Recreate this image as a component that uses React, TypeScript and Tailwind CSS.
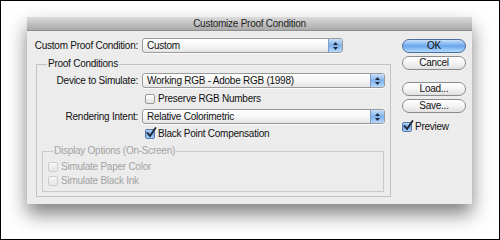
import React from 'react';

const FONT = { fontFamily: '"Liberation Sans", Arial, sans-serif' };

function SelectBox({ value, width }: { value: string; width: string }) {
  return (
    <div
      className={`${width} h-[15px] flex items-stretch rounded-[3px] border border-[#9a9a9a] bg-gradient-to-b from-white via-[#f7f7f7] to-[#e4e4e4] shadow-[0_1px_0_rgba(255,255,255,0.8)] overflow-hidden`}
    >
      <div className="flex-1 flex items-center pl-[4px] text-[10px] leading-none text-[#111] whitespace-nowrap">{value}</div>
      <div className="w-[14px] flex flex-col items-center justify-center gap-[2px] border-l border-[#7d9ccc] bg-gradient-to-b from-[#c9e0f8] via-[#7fb2ec] to-[#b7d8fb]">
        <svg width="5" height="3" viewBox="0 0 5 3">
          <path d="M2.5 0 L5 3 L0 3 Z" fill="#1f2a3a" />
        </svg>
        <svg width="5" height="3" viewBox="0 0 5 3">
          <path d="M0 0 L5 0 L2.5 3 Z" fill="#1f2a3a" />
        </svg>
      </div>
    </div>
  );
}

function CheckBox({ checked, disabled }: { checked?: boolean; disabled?: boolean }) {
  if (checked) {
    return (
      <div className="relative w-[10px] h-[10px] rounded-[2px] border border-[#5677a8] bg-gradient-to-b from-[#b5d4f6] via-[#6fa6e6] to-[#a9d0fa]">
        <svg className="absolute left-[0px] top-[-3px]" width="11" height="11" viewBox="0 0 11 11">
          <path d="M1.5 6 L4 9 L9.5 1" stroke="#1c2430" strokeWidth="1.8" fill="none" strokeLinecap="round" />
        </svg>
      </div>
    );
  }
  return (
    <div
      className={
        disabled
          ? 'w-[10px] h-[10px] rounded-[2px] border border-[#cdcdcd] bg-gradient-to-b from-[#f6f6f6] to-[#e6e6e6]'
          : 'w-[10px] h-[10px] rounded-[2px] border border-[#9a9a9a] bg-gradient-to-b from-white to-[#e2e2e2]'
      }
    />
  );
}

function PillButton({ label, primary }: { label: string; primary?: boolean }) {
  return (
    <div
      className={
        primary
          ? 'w-[64px] h-[14px] rounded-full border border-[#4d6e9c] bg-gradient-to-b from-[#c6e0fa] via-[#6aa6ea] to-[#b4dbff] flex items-center justify-center text-[10px] leading-none text-[#111]'
          : 'w-[64px] h-[14px] rounded-full border border-[#8c8c8c] bg-gradient-to-b from-white via-[#f4f4f4] to-[#e0e0e0] flex items-center justify-center text-[10px] leading-none text-[#111]'
      }
    >
      {label}
    </div>
  );
}

export default function App() {
  return (
    <div className="w-[500px] h-[240px] bg-white border border-black overflow-hidden tracking-[-0.25px]" style={FONT}>
      <div className="ml-[26px] mt-[16px] w-[445px] h-[187px] bg-[#ececec] flex flex-col shadow-[0_10px_18px_rgba(0,0,0,0.5)]">
        {/* Title bar */}
        <div className="h-[14px] flex items-center justify-center bg-gradient-to-b from-[#dcdcdc] to-[#a9a9a9] border-b border-[#8e8e8e] text-[10px] leading-none text-[#1e1e1e]">
          Customize Proof Condition
        </div>

        <div className="flex pl-[7px] pt-[7px]">
          {/* Left column */}
          <div className="w-[356px] flex flex-col">
            <div className="flex items-center">
              <div className="w-[104px] text-right text-[10px] leading-none text-[#111] whitespace-nowrap">Custom Proof Condition:</div>
              <div className="ml-[4px]">
                <SelectBox value="Custom" width="w-[201px]" />
              </div>
            </div>

            <fieldset className="ml-[2px] mt-[4px] w-[355px] border border-[#c2c2c2] pb-[4px]">
              <legend className="ml-[10px] px-[1px] text-[10px] leading-[14px] text-[#111]">Proof Conditions</legend>

              <div className="mt-[2px] flex items-center">
                <div className="w-[101px] text-right text-[10px] leading-none text-[#111] whitespace-nowrap">Device to Simulate:</div>
                <div className="ml-[4px]">
                  <SelectBox value="Working RGB - Adobe RGB (1998)" width="w-[243px]" />
                </div>
              </div>

              <div className="mt-[4px] h-[14px] pl-[108px] flex items-center gap-[3px]">
                <CheckBox />
                <span className="text-[10px] leading-none text-[#111]">Preserve RGB Numbers</span>
              </div>

              <div className="mt-[3px] flex items-center">
                <div className="w-[101px] text-right text-[10px] leading-none text-[#111] whitespace-nowrap">Rendering Intent:</div>
                <div className="ml-[4px]">
                  <SelectBox value="Relative Colorimetric" width="w-[243px]" />
                </div>
              </div>

              <div className="mt-[3px] h-[14px] pl-[108px] flex items-center gap-[3px]">
                <CheckBox checked />
                <span className="text-[10px] leading-none text-[#111]">Black Point Compensation</span>
              </div>

              <fieldset className="ml-[5px] mr-[6px] mt-[3px] border border-[#cacaca] pb-[3px]">
                <legend className="ml-[10px] px-[1px] text-[10px] leading-[14px] text-[#a3a3a3]">Display Options (On-Screen)</legend>
                <div className="mt-[2px] h-[14px] pl-[5px] flex items-center gap-[3px]">
                  <CheckBox disabled />
                  <span className="text-[10px] leading-none text-[#a3a3a3]">Simulate Paper Color</span>
                </div>
                <div className="h-[14px] pl-[5px] flex items-center gap-[3px]">
                  <CheckBox disabled />
                  <span className="text-[10px] leading-none text-[#a3a3a3]">Simulate Black Ink</span>
                </div>
              </fieldset>
            </fieldset>
          </div>

          {/* Right column */}
          <div className="ml-[12px] flex flex-col">
            <div className="mt-[1px]">
              <PillButton label="OK" primary />
            </div>
            <div className="mt-[3px]">
              <PillButton label="Cancel" />
            </div>
            <div className="mt-[12px]">
              <PillButton label="Load..." />
            </div>
            <div className="mt-[3px]">
              <PillButton label="Save..." />
            </div>
            <div className="mt-[8px] h-[12px] flex items-center gap-[3px]">
              <CheckBox checked />
              <span className="text-[10px] leading-none text-[#111]">Preview</span>
            </div>
          </div>
        </div>
      </div>
    </div>
  );
}
